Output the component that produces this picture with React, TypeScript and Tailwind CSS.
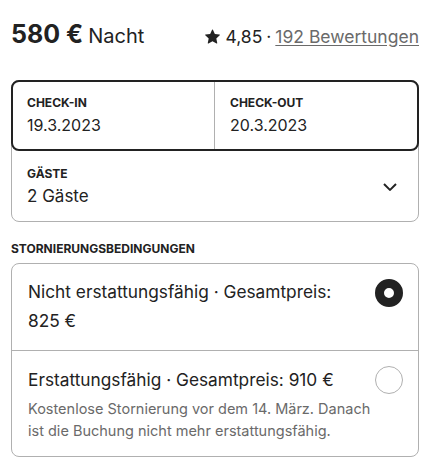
import React from "react";

export default function App() {
  const font = { fontFamily: "Inter, 'Noto Sans', sans-serif" };
  return (
    <div className="w-[430px] h-[468px] bg-white text-[#222222] px-[11px]" style={font}>
      <div className="flex items-end justify-between pt-[13px] h-[47px]">
        <div className="flex items-baseline gap-[5px]">
          <span className="text-[25px] font-bold leading-none">580 €</span>
          <span className="text-[20px] leading-none">Nacht</span>
        </div>
        <div className="flex items-center text-[17.5px] leading-none mb-[2px]">
          <svg viewBox="0 0 32 32" className="w-[15px] h-[15px] mr-[5px]" fill="#222222">
            <path d="M15.1 1.58l-4.13 8.88-9.86 1.27a1 1 0 0 0-.54 1.74l7.3 6.57-1.97 9.85a1 1 0 0 0 1.48 1.06l8.62-5 8.63 5a1 1 0 0 0 1.48-1.06l-1.97-9.85 7.3-6.57a1 1 0 0 0-.55-1.73l-9.86-1.28-4.12-8.88a1 1 0 0 0-1.82 0z" />
          </svg>
          <span>4,85</span>
          <span className="mx-[4px]">·</span>
          <span className="underline text-[#6a6a6a] underline-offset-2">192 Bewertungen</span>
        </div>
      </div>

      <div className="mt-[33px] rounded-[8px] border border-[#b0b0b0]">
        <div className="flex rounded-[8px] border-2 border-[#222222] -m-px h-[71px]">
          <div className="flex-1 border-r border-[#b0b0b0] pl-[14px] pt-[14px]">
            <div className="text-[12px] font-bold leading-[14px]">CHECK-IN</div>
            <div className="text-[16px] leading-[20px] mt-[5px]">19.3.2023</div>
          </div>
          <div className="flex-1 pl-[15px] pt-[14px]">
            <div className="text-[12px] font-bold leading-[14px]">CHECK-OUT</div>
            <div className="text-[16px] leading-[20px] mt-[5px]">20.3.2023</div>
          </div>
        </div>
        <div className="flex items-center justify-between h-[71px] pl-[15px] pr-[20px]">
          <div className="pt-[1px]">
            <div className="text-[12px] font-bold leading-[14px]">GÄSTE</div>
            <div className="text-[17px] leading-[20px] mt-[5px]">2 Gäste</div>
          </div>
          <svg viewBox="0 0 32 32" className="w-[16px] h-[16px]" fill="none" stroke="#222222" strokeWidth="4">
            <path d="M28 12L16.7 23.3a1 1 0 0 1-1.4 0L4 12" />
          </svg>
        </div>
      </div>

      <div className="mt-[20px] text-[12px] font-bold leading-[14px]">STORNIERUNGSBEDINGUNGEN</div>

      <div className="mt-[7px] rounded-[8px] border border-[#b0b0b0]">
        <div className="flex items-start justify-between pl-[16px] pr-[15px] pt-[17px] pb-[18px] border-b border-[#b0b0b0]">
          <div>
            <div className="text-[17.3px] leading-[22px]">Nicht erstattungsfähig · Gesamtpreis:</div>
            <div className="text-[17.3px] leading-[22px] mt-[7px]">825 €</div>
          </div>
          <div className="w-[28px] h-[28px] rounded-full border-[9px] border-[#222222] shrink-0 mt-[-2px]" />
        </div>
        <div className="flex items-start justify-between pl-[16px] pr-[15px] pt-[18px] pb-[14px]">
          <div className="min-w-0">
            <div className="text-[17.3px] leading-[22px] whitespace-nowrap">Erstattungsfähig · Gesamtpreis: 910 €</div>
            <div className="text-[14.5px] leading-[22px] text-[#6a6a6a] mt-[7px] whitespace-nowrap">
              Kostenlose Stornierung vor dem 14. März. Danach
              <br />
              ist die Buchung nicht mehr erstattungsfähig.
            </div>
          </div>
          <div className="w-[28px] h-[28px] rounded-full border border-[#b0b0b0] shrink-0 mt-[-3px]" />
        </div>
      </div>
    </div>
  );
}
